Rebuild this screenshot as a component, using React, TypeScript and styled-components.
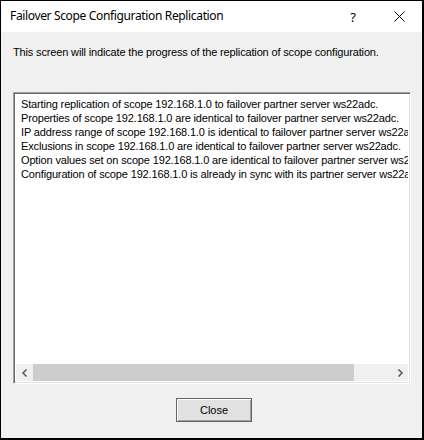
import React from 'react';
import styled, { createGlobalStyle } from 'styled-components';

const GlobalStyle = createGlobalStyle`
  html, body {
    margin: 0;
    padding: 0;
    background: #ffffff;
  }
  * {
    box-sizing: border-box;
  }
`;

const Window = styled.div`
  width: 424px;
  height: 440px;
  display: flex;
  flex-direction: column;
  background: #f0f0f0;
  border-top: 1px solid #000;
  border-left: 1px solid #000;
  border-right: 2px solid #000;
  border-bottom: 2px solid #000;
  font-family: "Liberation Sans", Arial, sans-serif;
  overflow: hidden;
`;

const TitleBar = styled.div`
  height: 31px;
  flex: none;
  display: flex;
  align-items: center;
  background: #ffffff;
  padding-left: 9px;
`;

const Title = styled.div`
  flex: 1;
  font-family: "Noto Sans", "Open Sans", sans-serif;
  font-size: 12px;
  letter-spacing: -0.35px;
  color: #000;
  padding-bottom: 2px;
`;

const CaptionButton = styled.div`
  width: 46px;
  height: 31px;
  display: flex;
  align-items: center;
  justify-content: center;
  color: #000;
  font-family: "Noto Sans", sans-serif;
  font-size: 13px;
`;

const Body = styled.div`
  flex: 1;
  display: flex;
  flex-direction: column;
  padding: 14px 11px 0 12px;
`;

const Description = styled.div`
  font-size: 11px;
  line-height: 13px;
  letter-spacing: -0.15px;
  color: #000;
  margin-bottom: 33px;
`;

const ListBox = styled.div`
  height: 292px;
  display: flex;
  flex-direction: column;
  background: #ffffff;
  border-top: 1px solid #a0a0a0;
  border-left: 1px solid #a0a0a0;
  border-right: 1px solid #ffffff;
  border-bottom: 1px solid #ffffff;
  box-shadow: inset 1px 1px 0 #696969, inset -1px -1px 0 #e3e3e3;
  padding: 2px;
`;

const Lines = styled.div`
  flex: 1;
  overflow: hidden;
  padding: 2px 0 0 5px;
`;

const Line = styled.div`
  font-size: 11px;
  line-height: 14px;
  letter-spacing: -0.15px;
  color: #000;
  white-space: nowrap;
`;

const HScroll = styled.div`
  height: 17px;
  flex: none;
  display: flex;
  background: #f0f0f0;
`;

const ArrowButton = styled.div`
  width: 17px;
  height: 17px;
  display: flex;
  align-items: center;
  justify-content: center;
  flex: none;
`;

const Track = styled.div`
  flex: 1;
  display: flex;
  padding: 0 37px 0 0;
`;

const Thumb = styled.div`
  flex: 1;
  background: #cdcdcd;
`;

const Footer = styled.div`
  display: flex;
  justify-content: center;
  padding: 14px 0 0 4px;
`;

const Button = styled.button`
  width: 76px;
  height: 24px;
  font-family: "Liberation Sans", Arial, sans-serif;
  font-size: 11px;
  color: #000;
  background: #e1e1e1;
  border: 1px solid #646464;
  box-shadow: inset 1px 1px 0 #ffffff, inset -1px -1px 0 #a0a0a0;
  padding: 0 0 1px 0;
`;

const lines = [
  'Starting replication of scope 192.168.1.0 to failover partner server ws22adc.',
  'Properties of scope 192.168.1.0 are identical to failover partner server ws22adc.',
  'IP address range of scope 192.168.1.0 is identical to failover partner server ws22adc.',
  'Exclusions in scope 192.168.1.0 are identical to failover partner server ws22adc.',
  'Option values set on scope 192.168.1.0 are identical to failover partner server ws22adc.',
  'Configuration of scope 192.168.1.0 is already in sync with its partner server ws22adc.',
];

const Chevron = ({ dir }: { dir: 'left' | 'right' }) => (
  <svg width="8" height="8" viewBox="0 0 8 8">
    <path
      d={dir === 'left' ? 'M5.5 0.5 L2 4 L5.5 7.5' : 'M2.5 0.5 L6 4 L2.5 7.5'}
      fill="none"
      stroke="#606060"
      strokeWidth="1.6"
    />
  </svg>
);

const App = () => {
  return (
    <>
      <GlobalStyle />
      <Window>
        <TitleBar>
          <Title>Failover Scope Configuration Replication</Title>
          <CaptionButton>?</CaptionButton>
          <CaptionButton>
            <svg width="11" height="11" viewBox="0 0 11 11">
              <path d="M0.5 0.5 L10.5 10.5 M10.5 0.5 L0.5 10.5" stroke="#000" strokeWidth="1" />
            </svg>
          </CaptionButton>
        </TitleBar>
        <Body>
          <Description>
            This screen will indicate the progress of the replication of scope configuration.
          </Description>
          <ListBox>
            <Lines>
              {lines.map((l) => (
                <Line key={l}>{l}</Line>
              ))}
            </Lines>
            <HScroll>
              <ArrowButton>
                <Chevron dir="left" />
              </ArrowButton>
              <Track>
                <Thumb />
              </Track>
              <ArrowButton>
                <Chevron dir="right" />
              </ArrowButton>
            </HScroll>
          </ListBox>
          <Footer>
            <Button>Close</Button>
          </Footer>
        </Body>
      </Window>
    </>
  );
};

export default App;
